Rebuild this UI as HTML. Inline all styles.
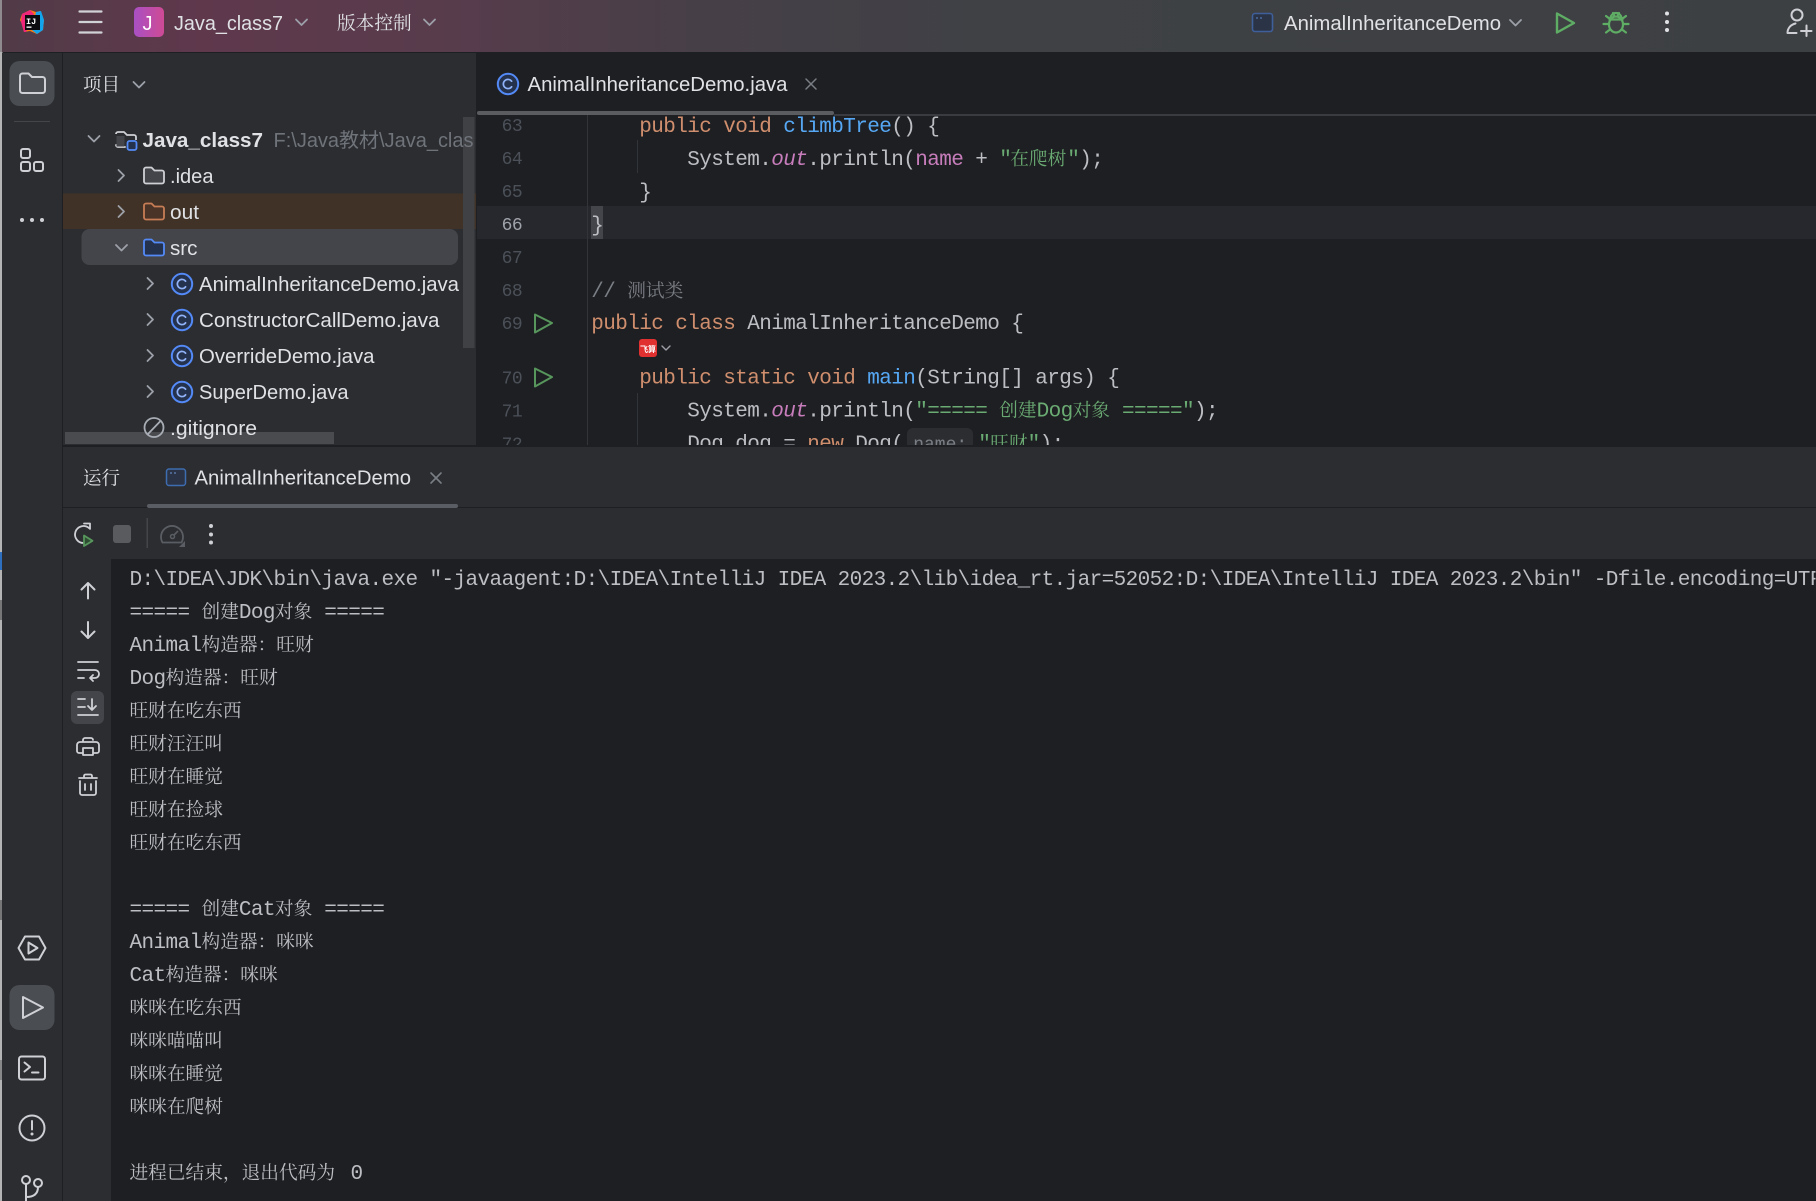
<!DOCTYPE html>
<html><head><meta charset="utf-8"><style>
html,body{margin:0;padding:0;background:#1e1f22;width:1816px;height:1201px;overflow:hidden}
svg{display:block;position:absolute;left:0;top:0}
text{white-space:pre}
.s{font-family:"Liberation Sans","Noto Sans CJK SC",sans-serif;font-size:20px;fill:#dfe1e5}
.z{font-family:"Liberation Serif","Noto Serif CJK SC",serif;font-size:18.5px;fill:#dfe1e5}
.m{font-family:"Liberation Mono","Noto Serif CJK SC",monospace;font-size:21px;letter-spacing:-.6px;fill:#bcbec4}
.c{font-family:"Noto Serif CJK SC",serif;font-size:18.7px;letter-spacing:0}
.n{font-family:"Liberation Mono",monospace;font-size:18px;letter-spacing:-.5px;fill:#4b5059;text-anchor:end}
.k{fill:#cf8e6d}.f{fill:#56a8f5}.p{fill:#c77dbb}.g{fill:#6aab73}.o{fill:#7a7e85}
.i{fill:none;stroke:#ced0d6;stroke-width:2;stroke-linecap:round;stroke-linejoin:round}
.h{fill:none;stroke:#9da0a8;stroke-width:1.8;stroke-linecap:round;stroke-linejoin:round}
</style></head><body>
<svg width="1816" height="1201" viewBox="0 0 1816 1201" xmlns="http://www.w3.org/2000/svg">
<defs>
<linearGradient id="top" x1="0" x2="1" y1="0" y2="0">
<stop offset="0" stop-color="#513b47"/><stop offset=".11" stop-color="#5f384c"/><stop offset=".25" stop-color="#573c4c"/><stop offset=".38" stop-color="#473f48"/><stop offset=".55" stop-color="#3f4145"/><stop offset="1" stop-color="#3d4043"/>
</linearGradient>
<linearGradient id="j" x1="0" x2="1" y1="0" y2="0"><stop offset="0" stop-color="#a950c4"/><stop offset="1" stop-color="#cf4a94"/></linearGradient>
<symbol id="ci" viewBox="0 0 24 24" width="24" height="24" overflow="visible">
<circle cx="12" cy="12" r="10.2" fill="#25324d" stroke="#548af7" stroke-width="2"/>
<path d="M15.6 9.2A4.6 4.6 0 1 0 15.6 14.8" fill="none" stroke="#8fb2f8" stroke-width="1.7" stroke-linecap="round"/>
</symbol>
<clipPath id="code"><rect x="477" y="115" width="1339" height="330"/></clipPath>
<clipPath id="tree"><rect x="63" y="118" width="413" height="327"/></clipPath>
<clipPath id="con"><rect x="111" y="559" width="1705" height="642"/></clipPath>
</defs>

<rect width="1816" height="1201" fill="#1e1f22"/>
<!-- left screen strip -->
<rect x="0" y="0" width="2.5" height="1201" fill="#b4b4b4"/>
<rect x="0" y="0" width="2.5" height="52" fill="#8f8a8d"/>
<rect x="0" y="552" width="2.5" height="18" fill="#2f6fc0"/>
<rect x="0" y="600" width="2.5" height="20" fill="#777"/>
<rect x="0" y="900" width="2.5" height="20" fill="#777"/>
<rect x="0" y="1060" width="2.5" height="20" fill="#888"/>

<!-- top bar -->
<rect x="2" y="0" width="1814" height="52" fill="url(#top)"/>
<!-- logo -->
<polygon points="22,14 30,10 36,12 40,11 44,20 43,30 37,34 30,31 24,32 22,24 20,20" fill="#f97a12"/>
<polygon points="22,14 30,10 34,14 26,32 24,32 21,22" fill="#f0267a"/>
<polygon points="36,12 41,11 44,20 43,30 37,34 32,30" fill="#12a4ec"/>
<rect x="25" y="15" width="15" height="15" fill="#0c0c10"/>
<text x="26" y="24" style="font:bold 8.5px 'Liberation Mono',monospace;fill:#fff">IJ</text>
<rect x="26.5" y="26.5" width="5" height="1.3" fill="#fff"/>
<!-- hamburger -->
<path d="M79.5 11.5H101.5M79.5 22H101.5M79.5 32.5H101.5" stroke="#d0d2d6" stroke-width="2.2" stroke-linecap="round"/>
<rect x="134" y="7" width="30" height="30" rx="5" fill="url(#j)"/>
<text x="142.5" y="30" class="s" style="fill:#fff;font-size:20px">J</text>
<text x="174" y="30" class="s" textLength="109" lengthAdjust="spacingAndGlyphs">Java_class7</text>
<path d="M296 19.5l5.5 5.5 5.500-5.500" class="h" fill="none"/>
<text x="337" y="29.500" class="z" style="font-size:18.700px">版本控制</text>
<path d="M424 19.500l5.500 5.500 5.500-5.500" class="h"/>
<rect x="1252.500" y="13.500" width="20" height="18" rx="2.500" fill="#2a3446" stroke="#3e5f9a" stroke-width="1.600"/>
<path d="M1256 18h2M1260 18h2" stroke="#5f86c9" stroke-width="1"/>
<text x="1284" y="30" class="s" textLength="217" lengthAdjust="spacingAndGlyphs">AnimalInheritanceDemo</text>
<path d="M1510 20l5.500 5.500 5.500-5.500" class="h"/>
<path d="M1557 13.500L1574 23 1557 32.500Z" fill="none" stroke="#5fad65" stroke-width="2.400" stroke-linejoin="round"/>
<g fill="none" stroke="#5fad65" stroke-width="2.200" stroke-linecap="round">
<ellipse cx="1616" cy="24.500" rx="7" ry="8"/>
<path d="M1610.500 18.500a5.500 5.500 0 0 1 11 0M1613 13l1 2M1619 13l-1 2M1610 19l-4-3M1622 19l4-3M1608 24h-4.500M1624 24h4.500M1610 29.500l-4 3M1622 29.500l4 3M1609.500 19.500h13"/>
</g>
<circle cx="1667" cy="13.500" r="2" fill="#dfe1e5"/><circle cx="1667" cy="22" r="2" fill="#dfe1e5"/><circle cx="1667" cy="30" r="2" fill="#dfe1e5"/>
<circle cx="1797" cy="15" r="5.500" class="i"/>
<path d="M1787.500 33c0-5 3.500-8.500 8-9.500M1787.500 33h9M1801 31h10.500M1806.500 25.500v10.500" class="i"/>

<!-- stripe -->
<rect x="2" y="53" width="60" height="1148" fill="#2b2d30"/>
<rect x="62" y="53" width="1" height="1148" fill="#1e1f22"/>
<rect x="9.500" y="61" width="45" height="45" rx="10" fill="#4a4d52"/>
<path d="M20 76a2.500 2.500 0 0 1 2.500-2.500h6l3.500 3.500h10.500a2.500 2.500 0 0 1 2.500 2.500v11a2.500 2.500 0 0 1-2.500 2.500h-20a2.500 2.500 0 0 1-2.500-2.500Z" class="i"/>
<rect x="14" y="121" width="36" height="1" fill="#43454a"/>
<g class="i"><rect x="21" y="149" width="9" height="9" rx="2"/><rect x="21" y="162" width="9" height="9" rx="2"/><rect x="34" y="162" width="9" height="9" rx="2"/></g>
<circle cx="22" cy="220" r="2" fill="#ced0d6"/><circle cx="32" cy="220" r="2" fill="#ced0d6"/><circle cx="42" cy="220" r="2" fill="#ced0d6"/>
<path d="M25 936.500h14l6.500 11.500-6.500 11.500h-14L18.500 948Z" class="i"/>
<path d="M28.500 942.500l9 5.500-9 5.500Z" class="i"/>
<rect x="9.500" y="985" width="45" height="45" rx="10" fill="#4a4d52"/>
<path d="M23 997l20 10.500-20 10.500Z" class="i"/>
<rect x="19" y="1056.500" width="26" height="23" rx="2.500" class="i"/>
<path d="M24.500 1062.500l5.500 4.500-5.500 4.500M32 1072.500h6.500" class="i"/>
<circle cx="32" cy="1128" r="12.500" class="i"/>
<path d="M32 1121v8.500" class="i"/><circle cx="32" cy="1134" r="1.500" fill="#ced0d6"/>
<circle cx="26" cy="1180" r="4" class="i"/><circle cx="38" cy="1183" r="4" class="i"/>
<path d="M26 1184.500V1201M26 1197c6 0 12-2 12-10" class="i"/>

<!-- project panel -->
<rect x="63" y="53" width="413" height="392" fill="#2b2d30"/>
<text x="83" y="91" class="z">项目</text>
<path d="M133.500 82l5.500 5.500 5.500-5.500" class="h"/>
<rect x="63" y="193.500" width="413" height="35.500" fill="#403226"/>
<rect x="81.500" y="229" width="376.500" height="36" rx="8" fill="#43454a"/>
<rect x="65" y="432" width="269" height="12" fill="#4a4b4e"/>
<rect x="463" y="117" width="11.500" height="231" fill="#3f4145"/>
<g clip-path="url(#tree)">
<path d="M88.500 136l5.500 5.500 5.500-5.500" class="h"/>
<path d="M116 134a2 2 0 0 1 2-2h6l3 3h7a2 2 0 0 1 2 2v3M125 147h-7a2 2 0 0 1-2-2Z" fill="none" stroke="#ced0d6" stroke-width="1.800" stroke-linejoin="round"/>
<path d="M116.500 136h8v10.500h-8Z" fill="#43454a"/>
<rect x="127.500" y="141" width="9" height="9" rx="2" fill="#25324d" stroke="#548af7" stroke-width="1.800"/>
<text x="142.500" y="147" class="s" style="font-weight:bold" textLength="120.500" lengthAdjust="spacingAndGlyphs">Java_class7</text>
<text x="273.500" y="147" class="s" style="fill:#6f737a" textLength="200" lengthAdjust="spacingAndGlyphs">F:\Java教材\Java_clas</text>

<path d="M118.500 170l5.500 5.500-5.500 5.500" class="h"/>
<path d="M144 169.500a2 2 0 0 1 2-2h5.500l3 3h7.500a2 2 0 0 1 2 2v9a2 2 0 0 1-2 2h-16a2 2 0 0 1-2-2Z" fill="#43454a" stroke="#ced0d6" stroke-width="1.800" stroke-linejoin="round"/>
<text x="170" y="183" class="s" textLength="43.500" lengthAdjust="spacingAndGlyphs">.idea</text>

<path d="M118.500 206l5.500 5.500-5.500 5.500" class="h"/>
<path d="M144 205.500a2 2 0 0 1 2-2h5.500l3 3h7.500a2 2 0 0 1 2 2v9a2 2 0 0 1-2 2h-16a2 2 0 0 1-2-2Z" fill="#4a3327" stroke="#c77d55" stroke-width="1.800" stroke-linejoin="round"/>
<text x="170" y="219" class="s" textLength="29" lengthAdjust="spacingAndGlyphs">out</text>

<path d="M116 245l5.500 5.500 5.500-5.500" class="h"/>
<path d="M144 241.500a2 2 0 0 1 2-2h5.500l3 3h7.500a2 2 0 0 1 2 2v9a2 2 0 0 1-2 2h-16a2 2 0 0 1-2-2Z" fill="#25324d" stroke="#548af7" stroke-width="1.800" stroke-linejoin="round"/>
<text x="170" y="255" class="s" textLength="27.500" lengthAdjust="spacingAndGlyphs">src</text>

<path d="M147.500 278l5.500 5.500-5.500 5.500" class="h"/><use href="#ci" x="170" y="272"/>
<text x="199" y="291" class="s" textLength="260" lengthAdjust="spacingAndGlyphs">AnimalInheritanceDemo.java</text>
<path d="M147.500 314l5.500 5.500-5.500 5.500" class="h"/><use href="#ci" x="170" y="308"/>
<text x="199" y="327" class="s" textLength="240.500" lengthAdjust="spacingAndGlyphs">ConstructorCallDemo.java</text>
<path d="M147.500 350l5.500 5.500-5.500 5.500" class="h"/><use href="#ci" x="170" y="344"/>
<text x="199" y="363" class="s" textLength="175.500" lengthAdjust="spacingAndGlyphs">OverrideDemo.java</text>
<path d="M147.500 386l5.500 5.500-5.500 5.500" class="h"/><use href="#ci" x="170" y="380"/>
<text x="199" y="399" class="s" textLength="149.500" lengthAdjust="spacingAndGlyphs">SuperDemo.java</text>

<circle cx="154" cy="427.500" r="9.500" fill="none" stroke="#a8adb5" stroke-width="1.800"/>
<path d="M147.500 434.500L160.500 421" stroke="#a8adb5" stroke-width="1.800"/>
<text x="170" y="435" class="s" textLength="87" lengthAdjust="spacingAndGlyphs">.gitignore</text>
</g>

<!-- editor tabs -->
<use href="#ci" x="496" y="72"/>
<text x="527.500" y="91" class="s" textLength="260" lengthAdjust="spacingAndGlyphs">AnimalInheritanceDemo.java</text>
<path d="M806 79l10 10M816 79l-10 10" stroke="#7a7e85" stroke-width="1.500" stroke-linecap="round"/>
<rect x="834" y="114" width="982" height="2" fill="#393b40"/>
<rect x="477" y="111" width="357" height="4" rx="2" fill="#5a5c60"/>

<!-- editor -->
<g clip-path="url(#code)">
<rect x="477" y="206" width="1339" height="33" fill="#26282e"/>
<rect x="587" y="115" width="1" height="330" fill="#313438"/>
<rect x="637" y="140" width="1" height="33" fill="#313438"/>
<rect x="637" y="393" width="1" height="60" fill="#313438"/>
<rect x="591" y="206" width="12" height="33" fill="#43454a"/>

<path d="M535 314.500L552 323 535 332.500Z" fill="none" stroke="#57965c" stroke-width="2" stroke-linejoin="round"/>
<path d="M535 368.500L552 377 535 386.500Z" fill="none" stroke="#57965c" stroke-width="2" stroke-linejoin="round"/>

<rect x="639" y="339" width="18" height="18" rx="3" fill="#e03030"/>
<text x="640" y="352" style="font:bold 8px 'Noto Sans CJK SC',sans-serif;fill:#fff">飞算</text>
<path d="M662 346l4 4 4-4" class="h" style="stroke-width:1.400"/>
<rect x="907" y="428" width="66" height="30" rx="6" fill="#2b2d30"/>

<g transform="translate(-.8 -1)">
<text x="523" y="132" class="n">63</text>
<text x="523" y="165" class="n">64</text>
<text x="523" y="198" class="n">65</text>
<text x="523" y="231" class="n" style="fill:#a1a3ab">66</text>
<text x="523" y="264" class="n">67</text>
<text x="523" y="297" class="n">68</text>
<text x="523" y="330" class="n">69</text>
<text x="523" y="384.500" class="n">70</text>
<text x="523" y="417.500" class="n">71</text>
<text x="523" y="450.500" class="n">72</text>

<text x="640" y="133" class="m"><tspan class="k">public void </tspan><tspan class="f">climbTree</tspan>() {</text>
<text x="688" y="166" class="m">System.<tspan class="p" style="font-style:italic">out</tspan>.println(<tspan class="p">name</tspan> + <tspan class="g">"</tspan></text>
<text x="1011" y="166" class="m g"><tspan class="c">在爬树</tspan></text>
<text x="1068" y="166" class="m"><tspan class="g">"</tspan>);</text>
<text x="640" y="199" class="m">}</text>
<text x="592" y="232" class="m">}</text>
<text x="592" y="298" class="m o">// <tspan class="c" dx="0">测试类</tspan></text>
<text x="592" y="330" class="m"><tspan class="k">public class </tspan>AnimalInheritanceDemo {</text>

<text x="640" y="384.500" class="m"><tspan class="k">public static void </tspan><tspan class="f">main</tspan>(String[] args) {</text>
<text x="688" y="417.500" class="m">System.<tspan class="p" style="font-style:italic">out</tspan>.println(<tspan class="g">"===== </tspan></text>
<text x="1000" y="417.500" class="m g"><tspan class="c">创建</tspan>Dog<tspan class="c">对象</tspan> =====<tspan style="fill:#6aab73">"</tspan><tspan style="fill:#bcbec4">);</tspan></text>
<text x="688" y="450.500" class="m">Dog dog = <tspan class="k">new </tspan>Dog(</text>
<text x="914" y="450.500" class="m o" style="font-size:18px;letter-spacing:0">name:</text>
<text x="979" y="450.500" class="m g">"<tspan class="c">旺财</tspan>"<tspan style="fill:#bcbec4">);</tspan></text>
</g>
</g>

<!-- run panel -->
<rect x="63" y="447" width="1753" height="112" fill="#2b2d30"/>
<rect x="63" y="507" width="1753" height="1" fill="#1e1f22"/>
<text x="83" y="484.500" class="z">运行</text>
<rect x="166.500" y="469" width="19" height="16.500" rx="2.500" fill="#2a3446" stroke="#3e6cb0" stroke-width="1.500"/>
<path d="M170 473h2M174 473h2" stroke="#6f97d8" stroke-width="1"/>
<text x="194.500" y="484.500" class="s" textLength="216.500" lengthAdjust="spacingAndGlyphs">AnimalInheritanceDemo</text>
<path d="M431 473l10 10M441 473l-10 10" stroke="#7a7e85" stroke-width="1.600" stroke-linecap="round"/>
<rect x="147" y="504" width="311" height="4" rx="2" fill="#5a5d63"/>

<!-- run toolbar -->
<g transform="translate(-1 0)">
<path d="M90 528a8.500 8.500 0 1 0-5 15" fill="none" stroke="#ced0d6" stroke-width="1.800" stroke-linecap="round"/>
<path d="M85 523.500h6v5.500" fill="none" stroke="#ced0d6" stroke-width="1.800" stroke-linecap="round" stroke-linejoin="round"/>
<path d="M85 535.500l8.500 5.300-8.500 5.200Z" fill="#2f4d33" stroke="#57965c" stroke-width="1.800" stroke-linejoin="round"/>
</g>
<rect x="113" y="525" width="18" height="18" rx="3" fill="#5a5b5e"/>
<rect x="146.500" y="518" width="1.500" height="30" fill="#43454a"/>
<path d="M162.500 542.500h18M162.500 542.500a11 11 0 1 1 19 0" fill="none" stroke="#5a5d63" stroke-width="1.800" stroke-linecap="round"/>
<circle cx="172.500" cy="536.500" r="2" fill="none" stroke="#5a5d63" stroke-width="1.500"/>
<path d="M174 535l4-4" stroke="#5a5d63" stroke-width="1.600"/>
<path d="M185 541v6h-6Z" fill="#5a5d63"/>
<circle cx="211" cy="526" r="2" fill="#ced0d6"/><circle cx="211" cy="534.500" r="2" fill="#ced0d6"/><circle cx="211" cy="542.500" r="2" fill="#ced0d6"/>

<!-- console side -->
<rect x="63" y="559" width="48" height="642" fill="#2b2d30"/>
<path d="M88 598.500V583M81.500 589.500L88 583l6.500 6.500" class="i"/>
<path d="M88 622v16M81.500 631.500L88 638l6.500-6.500" class="i"/>
<path d="M78 662h20M78 670h17a4 4 0 0 1 0 8h-5M93 675l-3 3 3 3M78 678h6" class="i" style="stroke-width:1.800"/>
<rect x="71" y="691" width="33" height="33" rx="6" fill="#43454a"/>
<path d="M78 699h7M78 707h7M78 715h20M92 699v11M88 706l4 4 4-4" class="i" style="stroke-width:1.800"/>
<path d="M83 742v-2a2 2 0 0 1 2-2h6a2 2 0 0 1 2 2M82 753h-3a2 2 0 0 1-2-2v-6a3 3 0 0 1 3-3h16a3 3 0 0 1 3 3v6a2 2 0 0 1-2 2h-3M83 748h10v7h-10Z" class="i" style="stroke-width:1.800"/>
<path d="M80 781v12a2 2 0 0 0 2 2h12a2 2 0 0 0 2-2v-12M79 778h18M84 778v-2a1.500 1.500 0 0 1 1.500-1.500h5a1.500 1.500 0 0 1 1.500 1.500v2M85 784v6M91 784v6" class="i" style="stroke-width:1.800"/>

<!-- console -->
<g clip-path="url(#con)" transform="translate(-.5 0)">
<text x="130" y="585" class="m">D:\IDEA\JDK\bin\java.exe "-javaagent:D:\IDEA\IntelliJ IDEA 2023.2\lib\idea_rt.jar=52052:D:\IDEA\IntelliJ IDEA 2023.2\bin" -Dfile.encoding=UTF-8 -classpath</text>
<text x="130" y="618" class="m">===== <tspan class="c">创建</tspan>Dog<tspan class="c">对象</tspan> =====</text>
<text x="130" y="651" class="m">Animal<tspan class="c">构造器：旺财</tspan></text>
<text x="130" y="684" class="m">Dog<tspan class="c">构造器：旺财</tspan></text>
<text x="130" y="717" class="m"><tspan class="c">旺财在吃东西</tspan></text>
<text x="130" y="750" class="m"><tspan class="c">旺财汪汪叫</tspan></text>
<text x="130" y="783" class="m"><tspan class="c">旺财在睡觉</tspan></text>
<text x="130" y="816" class="m"><tspan class="c">旺财在捡球</tspan></text>
<text x="130" y="849" class="m"><tspan class="c">旺财在吃东西</tspan></text>
<text x="130" y="915" class="m">===== <tspan class="c">创建</tspan>Cat<tspan class="c">对象</tspan> =====</text>
<text x="130" y="948" class="m">Animal<tspan class="c">构造器：咪咪</tspan></text>
<text x="130" y="981" class="m">Cat<tspan class="c">构造器：咪咪</tspan></text>
<text x="130" y="1014" class="m"><tspan class="c">咪咪在吃东西</tspan></text>
<text x="130" y="1047" class="m"><tspan class="c">咪咪喵喵叫</tspan></text>
<text x="130" y="1080" class="m"><tspan class="c">咪咪在睡觉</tspan></text>
<text x="130" y="1113" class="m"><tspan class="c">咪咪在爬树</tspan></text>
<text x="130" y="1179" class="m"><tspan class="c">进程已结束，退出代码为</tspan></text>
<text x="351" y="1179" class="m">0</text>
</g>
</svg>
</body></html>
